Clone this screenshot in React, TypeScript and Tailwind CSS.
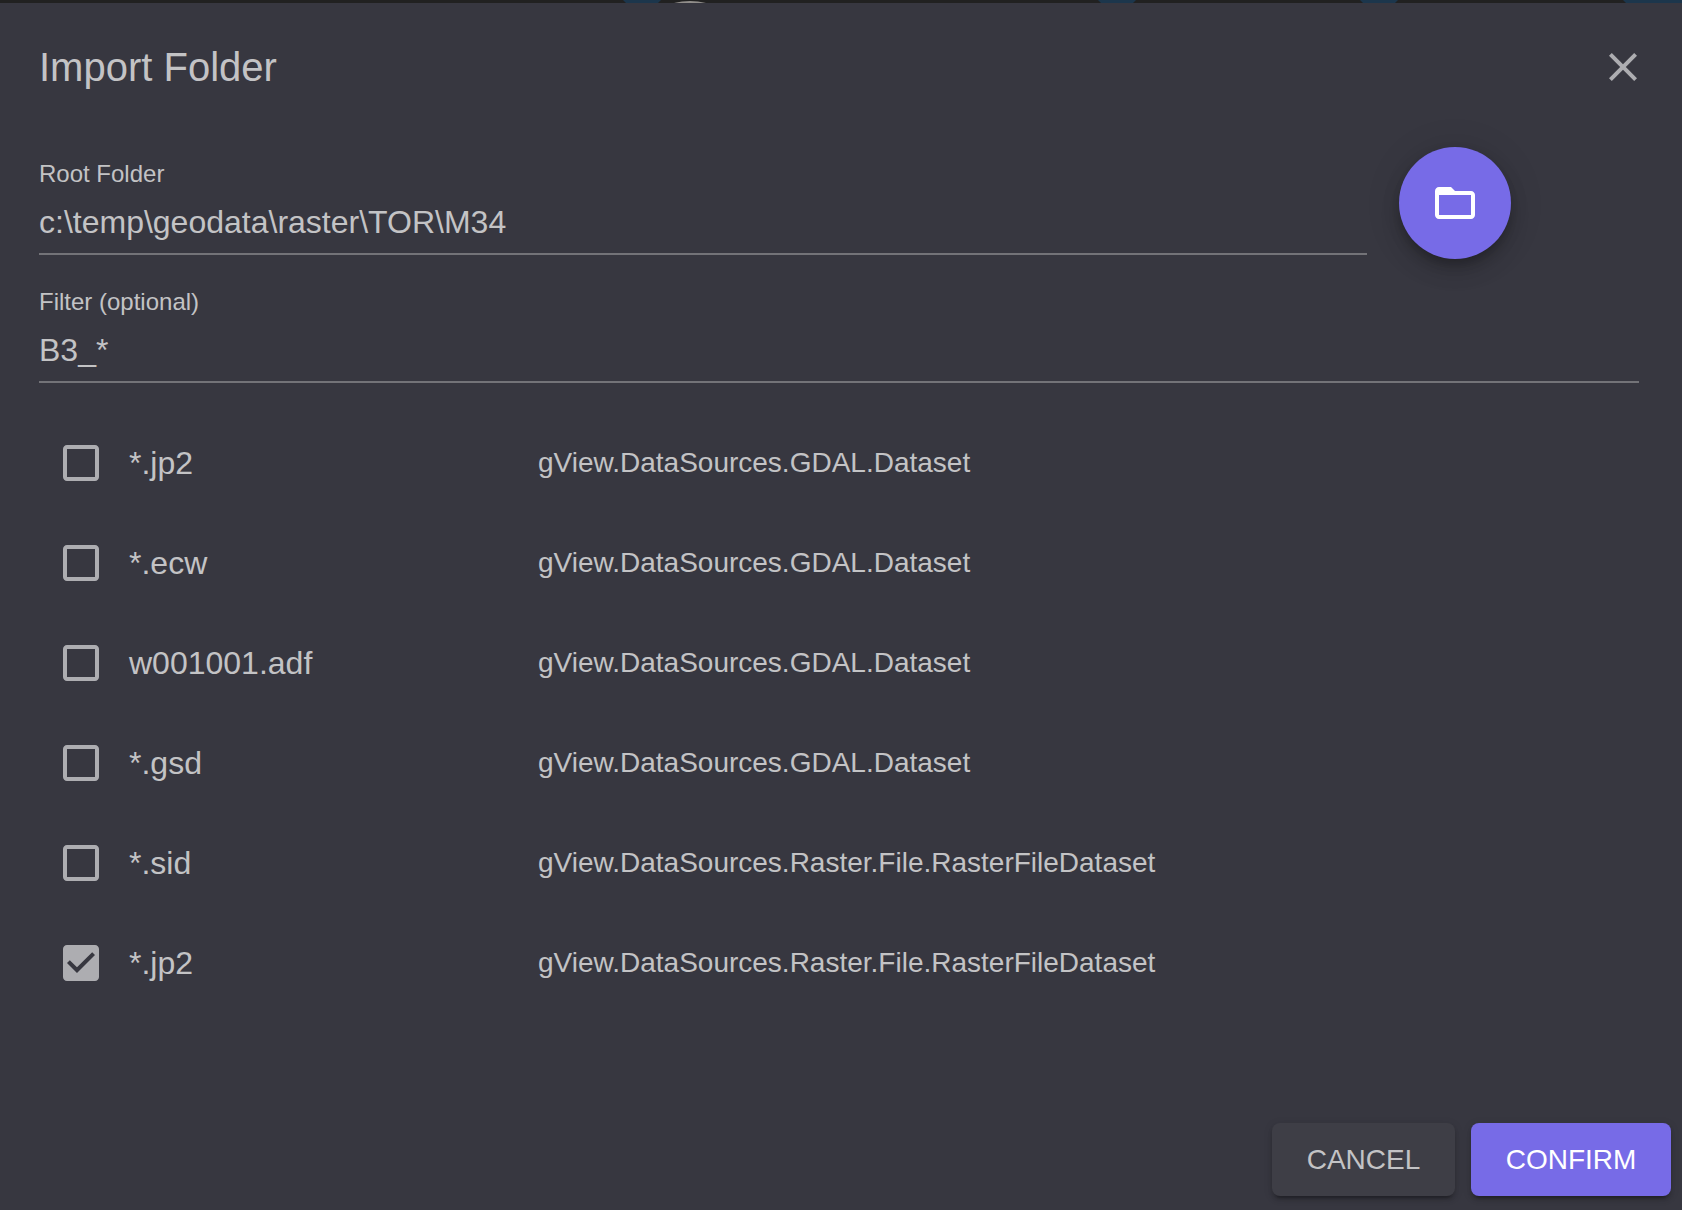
import { useState } from "react";

const fileTypes = [
  { pattern: "*.jp2", dataset: "gView.DataSources.GDAL.Dataset", checked: false },
  { pattern: "*.ecw", dataset: "gView.DataSources.GDAL.Dataset", checked: false },
  { pattern: "w001001.adf", dataset: "gView.DataSources.GDAL.Dataset", checked: false },
  { pattern: "*.gsd", dataset: "gView.DataSources.GDAL.Dataset", checked: false },
  { pattern: "*.sid", dataset: "gView.DataSources.Raster.File.RasterFileDataset", checked: false },
  { pattern: "*.jp2", dataset: "gView.DataSources.Raster.File.RasterFileDataset", checked: true },
];

function CloseIcon() {
  return (
    <svg viewBox="0 0 24 24" className="size-12" fill="currentColor" aria-hidden="true">
      <path d="M19 6.41L17.59 5 12 10.59 6.41 5 5 6.41 10.59 12 5 17.59 6.41 19 12 13.41 17.59 19 19 17.59 13.41 12z" />
    </svg>
  );
}

function FolderIcon() {
  return (
    <svg viewBox="0 0 24 24" className="size-12" fill="currentColor" aria-hidden="true">
      <path d="M20 6h-8l-2-2H4c-1.1 0-1.99.9-1.99 2L2 18c0 1.1.9 2 2 2h16c1.1 0 2-.9 2-2V8c0-1.1-.9-2-2-2zm0 12H4V8h16v10z" />
    </svg>
  );
}

function CheckboxIcon({ checked }: { checked: boolean }) {
  return (
    <svg
      viewBox="0 0 24 24"
      className="pointer-events-none col-start-1 row-start-1 size-12 text-[#adadb1]"
      fill="currentColor"
      aria-hidden="true"
    >
      {checked ? (
        <path d="M19 3H5c-1.11 0-2 .9-2 2v14c0 1.1.89 2 2 2h14c1.11 0 2-.9 2-2V5c0-1.1-.89-2-2-2zm-9 14l-5-5 1.41-1.41L10 14.17l7.59-7.59L19 8l-9 9z" />
      ) : (
        <path d="M19 5v14H5V5h14m0-2H5c-1.1 0-2 .9-2 2v14c0 1.1.9 2 2 2h14c1.1 0 2-.9 2-2V5c0-1.1-.9-2-2-2z" />
      )}
    </svg>
  );
}

function TextField({ id, label, initial }: { id: string; label: string; initial: string }) {
  const [value, setValue] = useState(initial);
  return (
    <div className="flex min-w-0 flex-1 flex-col border-b-2 border-[#737378]">
      <label htmlFor={id} className="text-2xl leading-[34px]">
        {label}
      </label>
      <input
        id={id}
        type="text"
        value={value}
        onChange={(e) => setValue(e.target.value)}
        className="h-[62px] w-full bg-transparent text-[32px] outline-none"
      />
    </div>
  );
}

function FileTypeRow({ id, pattern, dataset, initial }: { id: string; pattern: string; dataset: string; initial: boolean }) {
  const [checked, setChecked] = useState(initial);
  return (
    <li className="flex h-[100px] items-center">
      <div className="flex w-[499px] items-center pl-[18px]">
        <span className="grid size-12 shrink-0">
          <input
            id={id}
            type="checkbox"
            checked={checked}
            onChange={(e) => setChecked(e.target.checked)}
            className="col-start-1 row-start-1 size-12 cursor-pointer appearance-none"
          />
          <CheckboxIcon checked={checked} />
        </span>
        <label htmlFor={id} className="cursor-pointer pl-6 text-[32px] leading-[48px]">
          {pattern}
        </label>
      </div>
      <span className="text-[28px] leading-10">{dataset}</span>
    </li>
  );
}

export default function App() {
  return (
    <div className="flex min-h-screen flex-col bg-[#212121] font-['Liberation_Sans',Arial,sans-serif] text-[#c3c3c5]">
      <svg viewBox="0 0 1682 3" className="h-[3px] w-full" preserveAspectRatio="none" aria-hidden="true">
        <g fill="#1c364c">
          <path d="M623 0h38l-3 3h-32z" />
          <path d="M1098 0h38l-3 3h-32z" />
          <path d="M1360 0h38l-3 3h-32z" />
          <path d="M1623 0h59v3h-56z" />
        </g>
        <path d="M674 3q16-4 32 0z" fill="#918e8b" />
      </svg>

      <div role="dialog" aria-labelledby="dialog-title" className="flex flex-1 flex-col bg-[#373740]">
        <header className="flex items-center justify-between pt-8 pr-[35px] pl-[39px]">
          <h2 id="dialog-title" className="text-[40px] leading-[64px]">
            Import Folder
          </h2>
          <button type="button" aria-label="Close" className="cursor-pointer text-[#adadb1]">
            <CloseIcon />
          </button>
        </header>

        <main className="flex flex-1 flex-col pt-12 pr-[43px] pl-[39px]">
          <div className="flex items-start gap-8">
            <div className="flex min-w-0 flex-1 pt-[10px]">
              <TextField id="root-folder" label="Root Folder" initial="c:\temp\geodata\raster\TOR\M34" />
            </div>
            <div className="flex w-[240px] shrink-0">
              <button
                type="button"
                aria-label="Browse folder"
                className="flex size-28 cursor-pointer items-center justify-center rounded-full bg-[#776be7] text-white shadow-[0_6px_10px_-2px_rgba(0,0,0,0.2),0_12px_20px_0_rgba(0,0,0,0.14),0_2px_36px_0_rgba(0,0,0,0.12)]"
              >
                <FolderIcon />
              </button>
            </div>
          </div>
          <div className="flex pt-[26px]">
            <TextField id="filter" label="Filter (optional)" initial="B3_*" />
          </div>

          <ul className="flex flex-col pt-[30px]">
            {fileTypes.map((type, index) => (
              <FileTypeRow
                key={index}
                id={`file-type-${index}`}
                pattern={type.pattern}
                dataset={type.dataset}
                initial={type.checked}
              />
            ))}
          </ul>
        </main>

        <footer className="flex justify-end gap-4 pr-[11px] pb-[14px] text-[28px] leading-[49px]">
          <button
            type="button"
            className="w-[183px] cursor-pointer rounded-lg bg-[#3e3e46] py-3 shadow-[0_6px_2px_-4px_rgba(0,0,0,0.2),0_4px_4px_0_rgba(0,0,0,0.14),0_2px_10px_0_rgba(0,0,0,0.12)]"
          >
            CANCEL
          </button>
          <button
            type="button"
            className="w-[200px] cursor-pointer rounded-lg bg-[#776be7] py-3 text-white shadow-[0_6px_2px_-4px_rgba(0,0,0,0.2),0_4px_4px_0_rgba(0,0,0,0.14),0_2px_10px_0_rgba(0,0,0,0.12)]"
          >
            CONFIRM
          </button>
        </footer>
      </div>
    </div>
  );
}
